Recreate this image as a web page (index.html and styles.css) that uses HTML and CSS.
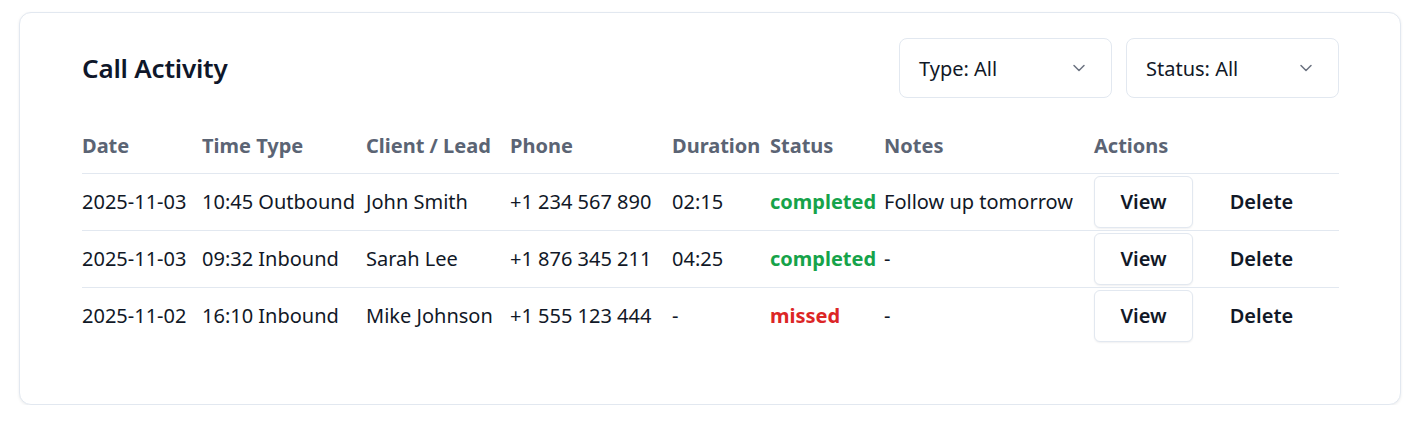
FILE: index.html
```html
<!DOCTYPE html>
<html lang="en">
<head>
<meta charset="utf-8">
<title>Call Activity</title>
<link rel="stylesheet" href="styles.css">
</head>
<body>
<div class="page">
  <section class="card">
    <div class="toolbar">
      <h2 class="title">Call Activity</h2>
      <div class="filters">
        <div class="select">
          <span>Type: All</span>
          <svg class="chev" width="14" height="14" viewBox="0 0 14 14"><path d="M2 4.5 L7 9.5 L12 4.5" fill="none" stroke="#6b7280" stroke-width="1.5" stroke-linecap="round" stroke-linejoin="round"/></svg>
        </div>
        <div class="select">
          <span>Status: All</span>
          <svg class="chev" width="14" height="14" viewBox="0 0 14 14"><path d="M2 4.5 L7 9.5 L12 4.5" fill="none" stroke="#6b7280" stroke-width="1.5" stroke-linecap="round" stroke-linejoin="round"/></svg>
        </div>
      </div>
    </div>
    <table class="calls">
      <colgroup>
        <col class="c-date"><col class="c-time"><col class="c-client"><col class="c-phone"><col class="c-dur"><col class="c-status"><col class="c-notes"><col class="c-actions">
      </colgroup>
      <thead>
        <tr><th>Date</th><th>Time Type</th><th>Client / Lead</th><th>Phone</th><th>Duration</th><th>Status</th><th>Notes</th><th>Actions</th></tr>
      </thead>
      <tbody>
        <tr>
          <td>2025-11-03</td><td>10:45 Outbound</td><td>John Smith</td><td>+1 234 567 890</td><td>02:15</td><td class="st ok">completed</td><td>Follow up tomorrow</td>
          <td><div class="acts"><button class="btn view">View</button><button class="btn del">Delete</button></div></td>
        </tr>
        <tr>
          <td>2025-11-03</td><td>09:32 Inbound</td><td>Sarah Lee</td><td>+1 876 345 211</td><td>04:25</td><td class="st ok">completed</td><td>-</td>
          <td><div class="acts"><button class="btn view">View</button><button class="btn del">Delete</button></div></td>
        </tr>
        <tr>
          <td>2025-11-02</td><td>16:10 Inbound</td><td>Mike Johnson</td><td>+1 555 123 444</td><td>-</td><td class="st miss">missed</td><td>-</td>
          <td><div class="acts"><button class="btn view">View</button><button class="btn del">Delete</button></div></td>
        </tr>
      </tbody>
    </table>
  </section>
</div>
</body>
</html>
```

FILE: styles.css
```css
* { box-sizing: border-box; }
html, body { margin: 0; padding: 0; background: #ffffff; }
body { font-family: "Noto Sans", "Open Sans", sans-serif; color: #111827; }
.page { padding: 12px 15px 0 19px; }
.card {
  width: 1382px;
  border: 1px solid #e2e8f0;
  border-radius: 12px;
  box-shadow: 0 1px 3px rgba(15, 23, 42, 0.08);
  padding: 25px 61px 60px 62px;
  background: #fff;
}
.toolbar { display: flex; align-items: center; justify-content: space-between; height: 60px; }
.title { margin: 0; font-size: 26px; font-weight: 600; color: #0f172a; letter-spacing: -0.2px; }
.filters { display: flex; gap: 14px; }
.select {
  width: 213px; height: 60px;
  border: 1px solid #e2e8f0; border-radius: 8px;
  display: flex; align-items: center; justify-content: space-between;
  padding: 0 25px 0 19px;
  font-size: 20px; color: #111827;
}
.chev { display: block; }
.calls { margin-top: 21px; width: 1257px; border-collapse: collapse; table-layout: fixed; font-size: 20px; }
.c-date { width: 120px; } .c-time { width: 164px; } .c-client { width: 144px; } .c-phone { width: 162px; }
.c-dur { width: 98px; } .c-status { width: 114px; } .c-notes { width: 210px; } .c-actions { width: 245px; }
th { text-align: left; font-weight: 700; color: #5b6474; height: 54px; padding: 0; white-space: nowrap; border-bottom: 1px solid #e2e8f0; }
td { height: 57px; padding: 0; white-space: nowrap; color: #111827; }
tbody tr + tr td { border-top: 1px solid #e2e8f0; }
.st { font-weight: 700; }
.ok { color: #16a34a; }
.miss { color: #dc2626; }
.acts { display: flex; gap: 19px; align-items: center; }
.btn {
  font-family: inherit; font-size: 20px; font-weight: 600; color: #111827;
  width: 99px; height: 52px; background: #fff; border-radius: 6px; cursor: pointer; padding: 0;
}
.view { border: 1px solid #e2e8f0; box-shadow: 0 1px 2px rgba(15, 23, 42, 0.06); }
.del { border: 1px solid transparent; background: transparent; }
```
